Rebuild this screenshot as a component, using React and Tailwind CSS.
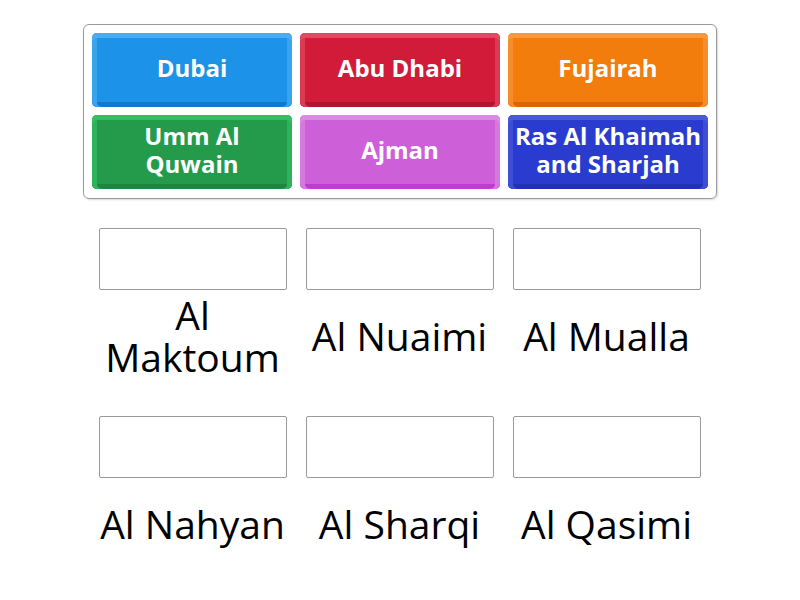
import React from "react";

const buttons = [
  { t: ["Dubai"], c: "bg-[#1c93e8]", s: "shadow-[inset_0_5px_0_#4aabef,inset_5px_0_0_#3aa3ec,inset_-5px_0_0_#3aa3ec,inset_0_-5px_0_#1577c9]" },
  { t: ["Abu Dhabi"], c: "bg-[#d11b38]", s: "shadow-[inset_0_5px_0_#df4a62,inset_5px_0_0_#da3a54,inset_-5px_0_0_#da3a54,inset_0_-5px_0_#b01530]" },
  { t: ["Fujairah"], c: "bg-[#f27c0c]", s: "shadow-[inset_0_5px_0_#f6983d,inset_5px_0_0_#f58d2a,inset_-5px_0_0_#f58d2a,inset_0_-5px_0_#d86608]" },
  { t: ["Umm Al", "Quwain"], c: "bg-[#239b4b]", s: "shadow-[inset_0_5px_0_#36be62,inset_5px_0_0_#2fb35a,inset_-5px_0_0_#2fb35a,inset_0_-5px_0_#1d8540]" },
  { t: ["Ajman"], c: "bg-[#cd5fd9]", s: "shadow-[inset_0_5px_0_#d98ae2,inset_5px_0_0_#d47ade,inset_-5px_0_0_#d47ade,inset_0_-5px_0_#be3ccf]" },
  { t: ["Ras Al Khaimah", "and Sharjah"], c: "bg-[#2a3bcf]", s: "shadow-[inset_0_5px_0_#4a5ad8,inset_5px_0_0_#3e4fd6,inset_-5px_0_0_#3e4fd6,inset_0_-5px_0_#2231b4]" },
];

const labels = [["Al", "Maktoum"], ["Al Nuaimi"], ["Al Mualla"], ["Al Nahyan"], ["Al Sharqi"], ["Al Qasimi"]];

export default function App() {
  return (
    <div className="w-[800px] h-[600px] bg-white" style={{ fontFamily: '"Open Sans", sans-serif' }}>
      <div className="pt-[24px] flex justify-center">
        <div className="w-[634px] border border-[#9a9a9a] rounded-[6px] shadow-[1px_1px_2px_rgba(0,0,0,0.15)] p-[8px] pb-[9px] grid grid-cols-3 gap-[8px]">
          {buttons.map((b, i) => (
            <div
              key={i}
              className={`h-[74px] pb-[4px] rounded-[5px] ${b.c} ${b.s} flex flex-col items-center justify-center text-white font-bold text-[24px] leading-[28px] text-center whitespace-nowrap`}
            >
              {b.t.map((l, j) => (
                <div key={j}>{l}</div>
              ))}
            </div>
          ))}
        </div>
      </div>
      <div className="mt-[29px] ml-[89px] w-[621px] grid grid-cols-3">
        {labels.map((l, i) => (
          <div key={i} className="h-[188px] flex flex-col items-center">
            <div className="w-[188px] h-[62px] border border-[#999] rounded-[2px] bg-white" />
            <div className="h-[92px] flex flex-col items-center justify-center text-[39px] leading-[42px] text-black text-center">
              {l.map((x, j) => (
                <div key={j}>{x}</div>
              ))}
            </div>
          </div>
        ))}
      </div>
    </div>
  );
}
